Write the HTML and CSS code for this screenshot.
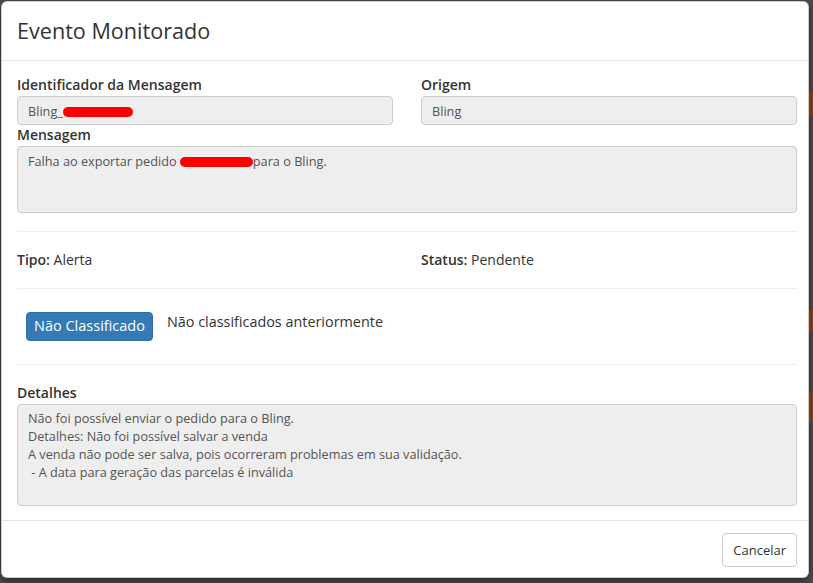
FILE: index.html
```html
<!DOCTYPE html>
<html lang="pt">
<head>
<meta charset="utf-8">
<link rel="stylesheet" href="styles.css">
</head>
<body>
<div class="backdrop">
  <span class="mark mark-a"></span>
  <span class="mark mark-b"></span>
  <span class="mark mark-c"></span>
  <div class="modal">
    <div class="modal-header">
      <h4 class="modal-title">Evento Monitorado</h4>
    </div>
    <div class="modal-body">
      <div class="row two">
        <div class="group">
          <label class="lbl">Identificador da Mensagem</label>
          <div class="input">Bling_<span class="redact redact-id"></span></div>
        </div>
        <div class="group">
          <label class="lbl">Origem</label>
          <div class="input">Bling</div>
        </div>
      </div>
      <div class="group">
        <label class="lbl">Mensagem</label>
        <div class="textarea msg">Falha ao exportar pedido <span class="redact redact-msg"></span>para o Bling.</div>
      </div>
      <hr class="sep sep-first">
      <div class="row two info">
        <div><b>Tipo:</b> Alerta</div>
        <div><b>Status:</b> Pendente</div>
      </div>
      <hr class="sep sep-mid">
      <div class="classif">
        <span class="btn-primary">Não Classificado</span>
        <span class="classif-text">Não classificados anteriormente</span>
      </div>
      <hr class="sep sep-last">
      <div class="group">
        <label class="lbl">Detalhes</label>
        <div class="textarea details">Não foi possível enviar o pedido para o Bling.<br>Detalhes: Não foi possível salvar a venda<br>A venda não pode ser salva, pois ocorreram problemas em sua validação.<br>&nbsp;- A data para geração das parcelas é inválida</div>
      </div>
    </div>
    <div class="modal-footer">
      <button class="btn-default">Cancelar</button>
    </div>
  </div>
</div>
</body>
</html>
```
FILE: styles.css
```css
* { box-sizing: border-box; }
html, body { margin: 0; padding: 0; }
body {
  background: #4d4d4d;
  font-family: "Open Sans", "Noto Sans", sans-serif;
  color: #333;
  width: 813px;
  height: 583px;
  overflow: hidden;
}
.backdrop {
  position: relative;
  width: 813px;
  height: 583px;
  padding: 1px 4px 0 1px;
}
.mark {
  position: absolute;
  right: 0;
  width: 4px;
  background: #7a3a0c;
}
.mark-a { top: 92px; height: 24px; }
.mark-b { top: 310px; height: 22px; }
.mark-c { top: 392px; height: 30px; }
.modal {
  background: #fff;
  border-radius: 6px;
  width: 808px;
  height: 577px;
  box-shadow: 0 3px 9px rgba(0,0,0,.5);
  border: 1px solid rgba(0,0,0,.2);
}
.modal-header {
  padding: 13px 15px 0 15px;
  height: 59px;
  border-bottom: 1px solid #e5e5e5;
}
.modal-title {
  margin: 0;
  font-size: 21.6px;
  font-weight: 400;
  line-height: 32px;
  color: #333;
}
.modal-body {
  padding: 14px 11px 14px 15px;
}
.row.two {
  display: grid;
  grid-template-columns: 1fr 1fr;
  column-gap: 28px;
}
.lbl {
  display: block;
  font-size: 14px;
  font-weight: 600;
  line-height: 20px;
  height: 20px;
  margin-bottom: 1px;
  color: #333;
}
.input, .textarea {
  background: #eee;
  border: 1px solid #ccc;
  border-radius: 4px;
  font-size: 12.7px;
  color: #555;
  padding: 5px 10px;
  line-height: 18px;
}
.input { height: 29px; }
.textarea.msg { height: 67px; }
.textarea.details { height: 102px; padding-top: 4px; }
.redact {
  display: inline-block;
  background: #ff0000;
  border-radius: 8px;
  height: 10px;
  vertical-align: -1px;
}
.redact-id { width: 70px; }
.redact-msg { width: 73px; }
.sep {
  border: 0;
  border-top: 1px solid #eee;
}
.sep-first { margin: 18px 0 18px 0; }
.sep-mid { margin: 18px 0 17px 0; }
.sep-last { margin: 0 0 18px 0; }
.info {
  font-size: 14px;
  line-height: 20px;
}
.info b { font-weight: 600; }
.classif {
  display: flex;
  align-items: flex-start;
  padding: 6px 9px 0 9px;
  height: 58px;
}
.btn-primary {
  display: inline-block;
  background: #337ab7;
  color: #fff;
  border: 1px solid #2e6da4;
  border-radius: 4px;
  font-size: 14.5px;
  line-height: 20px;
  padding: 3px 7px 4px 7px;
}
.classif-text {
  font-size: 14.4px;
  line-height: 20px;
  margin-left: 14px;
  margin-top: 0;
}
.modal-footer {
  border-top: 1px solid #e5e5e5;
  padding: 12px 11px 0 15px;
  display: flex;
  justify-content: flex-end;
}
.btn-default {
  font-family: inherit;
  background: #fff;
  border: 1px solid #ccc;
  border-radius: 4px;
  color: #333;
  font-size: 13px;
  height: 34px;
  padding: 0 10px;
}
```
